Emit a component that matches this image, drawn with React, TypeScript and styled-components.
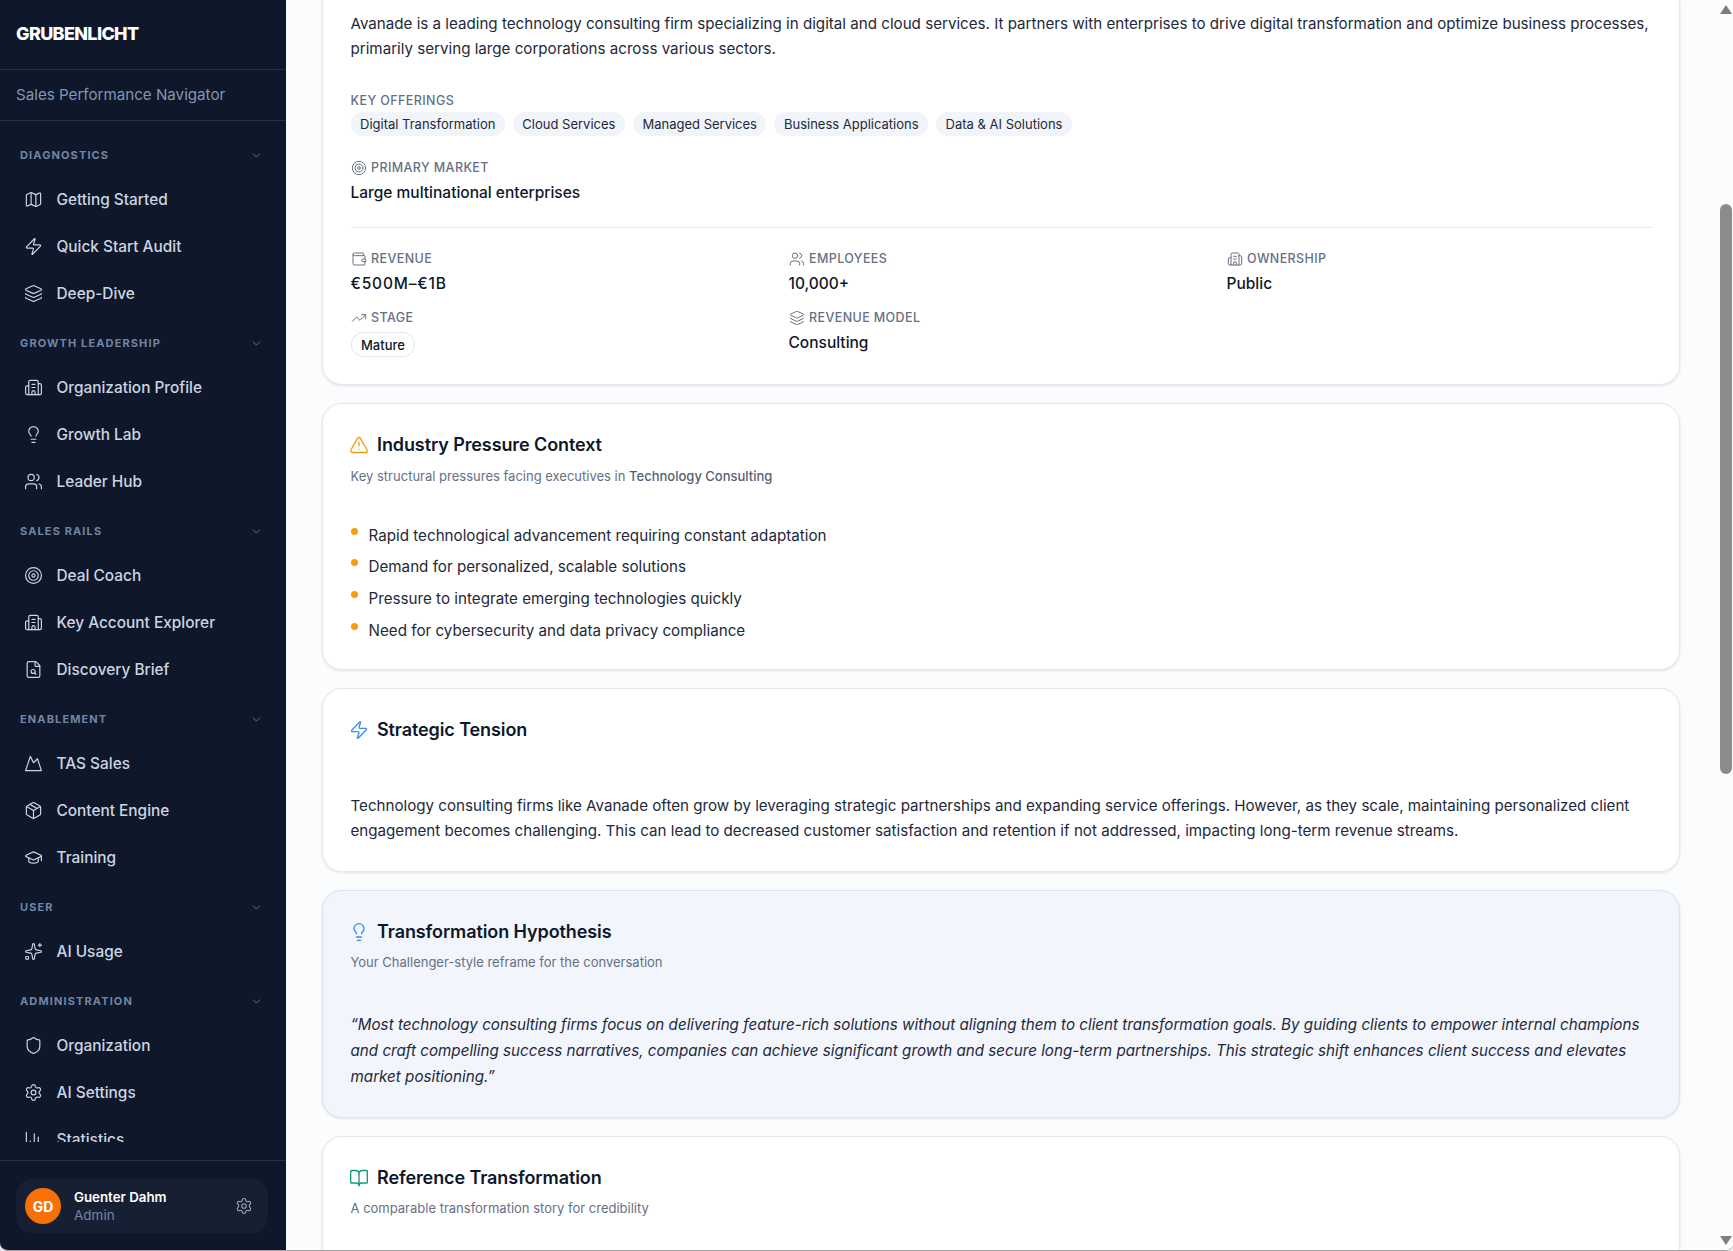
import React from "react";
import styled, { createGlobalStyle } from "styled-components";
import {
  AlertTriangle, BarChart3, BookOpen, Building2, ChevronDown, FileSearch, GraduationCap, Layers,
  Lightbulb, Map as MapIcon, Mountain, Package, Settings, Shield, Sparkles, Target, TrendingUp,
  Users, Wallet, Zap,
} from "lucide-react";

const Global = createGlobalStyle`
  html, body { margin: 0; padding: 0; height: 100%; background: #e8e8e8; }
  * { box-sizing: border-box; }
  body { font-family: Inter, "Noto Sans", sans-serif; -webkit-font-smoothing: auto; }
`;

const Frame = styled.div`
  height: 100vh; display: flex; overflow: hidden; position: relative;
  border-bottom: 1px solid #a3a3a3; border-radius: 0 0 8px 8px; background: #fbfcfd;
`;
const Sidebar = styled.aside`
  width: 286px; flex: none; background: #0f172a; display: flex; flex-direction: column; min-height: 0;
`;
const Brand = styled.div`
  height: 70px; flex: none; padding: 0 16px 2px; display: flex; align-items: center;
  border-bottom: 1px solid #262f40; color: #fff; font-size: 18px; font-weight: 800; letter-spacing: -0.65px;
`;
const Tagline = styled.div`
  height: 51px; flex: none; padding: 0 16px 2px; display: flex; align-items: center;
  border-bottom: 1px solid #262f40; color: #8496b0; font-size: 15.15px;
`;
const Nav = styled.nav`
  flex: 1; min-height: 0; overflow: hidden; padding-top: 18px; margin-bottom: 18px;
`;
const Group = styled.section`
  margin-bottom: 14px;
`;
const GroupHead = styled.div`
  height: 32px; padding: 0 23px 0 20px; display: flex; align-items: center; justify-content: space-between;
  color: #7186a6; font-size: 11px; font-weight: 700; letter-spacing: 1.12px; text-transform: uppercase;
  margin-bottom: 8px;
  svg { color: #7186a6; }
`;
const Item = styled.a`
  height: 40px; margin-bottom: 7px; padding-left: 24px; display: flex; align-items: center; gap: 13.5px;
  color: #cbd5e1; font-size: 15.4px; font-weight: 500; white-space: nowrap;
  &:last-child { margin-bottom: 0; }
  svg { flex: none; color: #cbd5e1; }
`;
const Footer = styled.div`
  flex: none; padding: 18px 18px 17px 16px; border-top: 1px solid #262f40;
`;
const UserCard = styled.div`
  height: 54px; border-radius: 16px; background: #162032; padding: 0 15px 0 9px;
  display: flex; align-items: center; gap: 13px;
  > svg { color: #94a3b8; flex: none; }
`;
const Avatar = styled.div`
  width: 36px; height: 36px; flex: none; border-radius: 50%; background: #f97006;
  display: flex; align-items: center; justify-content: center; color: #fff; font-size: 14px; font-weight: 700;
`;
const UserText = styled.div`flex: 1; min-width: 0;`;
const UserName = styled.div`color: #fff; font-size: 13.3px; font-weight: 600; line-height: 18px;`;
const UserRole = styled.div`color: #7186a6; font-size: 13.5px; line-height: 18px;`;

const Main = styled.main`
  flex: 1; min-width: 0; overflow: hidden; padding: 0 53px 0 36px;
  display: flex; flex-direction: column; gap: 18px;
`;
const Card = styled.article<{ $tint?: boolean; $clipped?: boolean; $bottom?: number }>`
  flex: none; border-radius: 20px; padding: 27px 27px ${(p) => p.$bottom ?? 28}px 27.5px;
  background: ${(p) => (p.$tint ? "#f2f5fb" : "#fff")};
  border: 1px solid ${(p) => (p.$tint ? "#d6e3f6" : "#e5e7eb")};
  box-shadow: 0 1px 3px rgba(15, 23, 42, 0.1);
  ${(p) => (p.$clipped ? "margin-top: -19px; padding-top: 29px;" : "")}
`;
const Title = styled.h2`
  margin: 0; display: flex; align-items: center; gap: 8px; color: #0f172a;
  font-size: 18px; font-weight: 600; line-height: 28px; letter-spacing: -0.1px;
  svg { margin-left: -1.5px; }
`;
const Sub = styled.p`
  margin: 6.5px 0 0; color: #667085; font-size: 13px; line-height: 20px;
  strong { font-weight: 500; color: #566074; }
`;
const Body = styled.p<{ $top?: number }>`
  margin: ${(p) => p.$top ?? 0}px 0 0; color: #1e293b; font-size: 15.15px; line-height: 25px;
`;
const Quote = styled.p`
  margin: 39.5px 0 0; color: #1e293b; font-size: 15.2px; line-height: 26px; font-style: italic;
`;
const Label = styled.div`
  display: flex; align-items: center; gap: 4.5px; color: #667085; font-size: 12.5px; font-weight: 500;
  line-height: 16px; letter-spacing: 0.4px; text-transform: uppercase;
  svg { color: #667085; }
`;
const Pills = styled.div`display: flex; gap: 8px; margin-top: 3px;`;
const Pill = styled.span`
  height: 24px; padding: 0 9.5px; border-radius: 12px; background: #f1f4f8; color: #1e293b;
  font-size: 13px; font-weight: 400; display: inline-flex; align-items: center;
`;
const Outline = styled(Pill)`
  height: 25px; background: #fff; border: 1px solid #e2e5ea; color: #0f172a; margin-top: 6px; font-weight: 500;
`;
const Value = styled.div`
  margin-top: 5px; color: #0f172a; font-size: 15.5px; font-weight: 500; line-height: 24px;
`;
const Money = styled(Value)`letter-spacing: 0.8px;`;
const Stack = styled.div<{ $top: number }>`margin-top: ${(p) => p.$top}px;`;
const Divider = styled.hr`
  border: 0; border-top: 1px solid #e5e7eb; margin: 22px 0 23px;
`;
const Facts = styled.div`
  display: grid; grid-template-columns: repeat(3, 1fr); column-gap: 12.5px; row-gap: 14px;
`;
const Bullets = styled.ul`
  list-style: none; margin: 37px 0 0; padding: 0; display: flex; flex-direction: column; gap: 6.7px;
`;
const Bullet = styled.li`
  display: flex; gap: 11px; color: #1e293b; font-size: 15.2px; line-height: 25px;
  &::before {
    content: ""; width: 7px; height: 7px; border-radius: 50%; background: #f59e0b; flex: none; margin-top: 5px;
  }
`;
const ScrollTrack = styled.div`
  position: absolute; top: 0; right: 0; bottom: 0; width: 17px; background: #fbfcfd;
`;
const ThumbBar = styled.div`
  position: absolute; top: 204px; left: 4px; width: 12px; height: 570px; border-radius: 6px; background: #8b8b8b;
`;
const Arrow = styled.div<{ $down?: boolean }>`
  position: absolute; left: 4px; ${(p) => (p.$down ? "bottom: 5px;" : "top: 5px;")}
  width: 0; height: 0; border-left: 6px solid transparent; border-right: 6px solid transparent;
  ${(p) => (p.$down ? "border-top: 9px solid #7d7d7d;" : "border-bottom: 9px solid #7d7d7d;")}
`;

const nav: { head: string; items: [React.ComponentType<any>, string][] }[] = [
  { head: "Diagnostics", items: [[MapIcon, "Getting Started"], [Zap, "Quick Start Audit"], [Layers, "Deep-Dive"]] },
  { head: "Growth Leadership", items: [[Building2, "Organization Profile"], [Lightbulb, "Growth Lab"], [Users, "Leader Hub"]] },
  { head: "Sales Rails", items: [[Target, "Deal Coach"], [Building2, "Key Account Explorer"], [FileSearch, "Discovery Brief"]] },
  { head: "Enablement", items: [[Mountain, "TAS Sales"], [Package, "Content Engine"], [GraduationCap, "Training"]] },
  { head: "User", items: [[Sparkles, "AI Usage"]] },
  { head: "Administration", items: [[Shield, "Organization"], [Settings, "AI Settings"], [BarChart3, "Statistics"]] },
];
const offerings = ["Digital Transformation", "Cloud Services", "Managed Services", "Business Applications", "Data & AI Solutions"];
const pressures = [
  "Rapid technological advancement requiring constant adaptation",
  "Demand for personalized, scalable solutions",
  "Pressure to integrate emerging technologies quickly",
  "Need for cybersecurity and data privacy compliance",
];

export default function App() {
  return (
    <Frame>
      <Global />
      <Sidebar>
        <Brand>GRUBENLICHT</Brand>
        <Tagline>Sales Performance Navigator</Tagline>
        <Nav>
          {nav.map((g) => (
            <Group key={g.head}>
              <GroupHead>{g.head}<ChevronDown size={13} strokeWidth={1.5} /></GroupHead>
              {g.items.map(([Icon, label]) => (
                <Item key={label}><Icon size={19} strokeWidth={1.5} />{label}</Item>
              ))}
            </Group>
          ))}
        </Nav>
        <Footer>
          <UserCard>
            <Avatar>GD</Avatar>
            <UserText>
              <UserName>Guenter Dahm</UserName>
              <UserRole>Admin</UserRole>
            </UserText>
            <Settings size={18} strokeWidth={1.5} />
          </UserCard>
        </Footer>
      </Sidebar>
      <Main>
        <Card $clipped $bottom={27}>
          <Body>Avanade is a leading technology consulting firm specializing in digital and cloud services. It partners with enterprises to drive digital transformation and optimize business processes, primarily serving large corporations across various sectors.</Body>
          <Stack $top={32}>
            <Label>Key Offerings</Label>
            <Pills>{offerings.map((o) => <Pill key={o}>{o}</Pill>)}</Pills>
          </Stack>
          <Stack $top={24}>
            <Label><Target size={16} strokeWidth={1.5} />Primary Market</Label>
            <Value>Large multinational enterprises</Value>
          </Stack>
          <Divider />
          <Facts>
            <div><Label><Wallet size={16} strokeWidth={1.5} />Revenue</Label><Money>€500M–€1B</Money></div>
            <div><Label><Users size={16} strokeWidth={1.5} />Employees</Label><Value>10,000+</Value></div>
            <div><Label><Building2 size={16} strokeWidth={1.5} />Ownership</Label><Value>Public</Value></div>
            <div><Label><TrendingUp size={16} strokeWidth={1.5} />Stage</Label><Outline>Mature</Outline></div>
            <div><Label><Layers size={16} strokeWidth={1.5} />Revenue Model</Label><Value>Consulting</Value></div>
          </Facts>
        </Card>
        <Card $bottom={26}>
          <Title><AlertTriangle size={20} strokeWidth={1.6} color="#f59e0b" />Industry Pressure Context</Title>
          <Sub>Key structural pressures facing executives in <strong>Technology Consulting</strong></Sub>
          <Bullets>{pressures.map((p) => <Bullet key={p}>{p}</Bullet>)}</Bullets>
        </Card>
        <Card>
          <Title><Zap size={20} strokeWidth={1.6} color="#3b8fe8" />Strategic Tension</Title>
          <Body $top={49}>Technology consulting firms like Avanade often grow by leveraging strategic partnerships and expanding service offerings. However, as they scale, maintaining personalized client engagement becomes challenging. This can lead to decreased customer satisfaction and retention if not addressed, impacting long-term revenue streams.</Body>
        </Card>
        <Card $tint $bottom={27}>
          <Title><Lightbulb size={20} strokeWidth={1.6} color="#3b8fe8" />Transformation Hypothesis</Title>
          <Sub>Your Challenger-style reframe for the conversation</Sub>
          <Quote>“Most technology consulting firms focus on delivering feature-rich solutions without aligning them to client transformation goals. By guiding clients to empower internal champions and craft compelling success narratives, companies can achieve significant growth and secure long-term partnerships. This strategic shift enhances client success and elevates market positioning.”</Quote>
        </Card>
        <Card $bottom={160}>
          <Title><BookOpen size={20} strokeWidth={1.6} color="#0f9d76" />Reference Transformation</Title>
          <Sub>A comparable transformation story for credibility</Sub>
        </Card>
      </Main>
      <ScrollTrack>
        <Arrow />
        <ThumbBar />
        <Arrow $down />
      </ScrollTrack>
    </Frame>
  );
}
